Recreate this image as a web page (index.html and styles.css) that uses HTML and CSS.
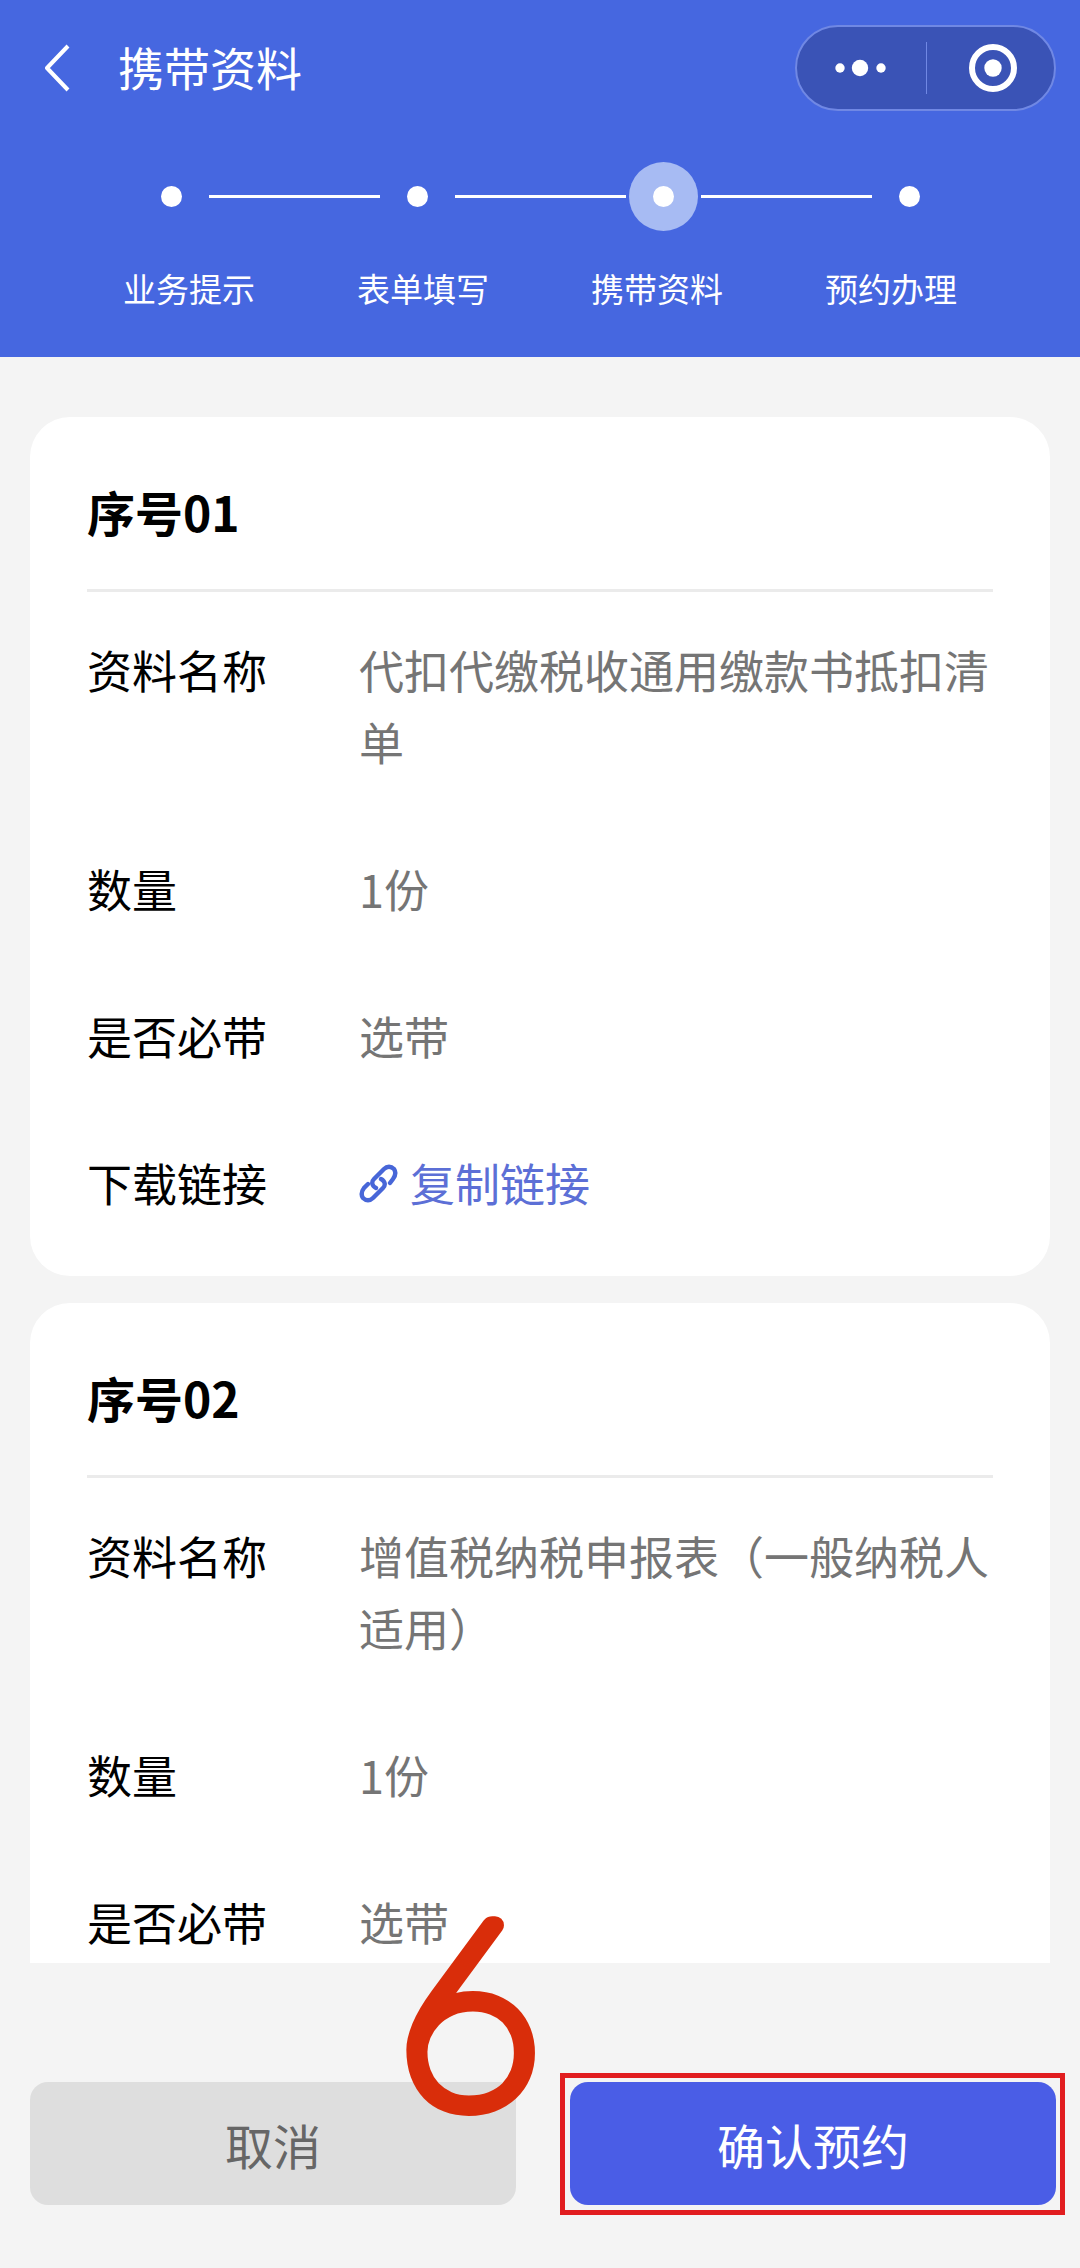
FILE: index.html
```html
<!DOCTYPE html>
<html lang="zh-CN">
<head>
<meta charset="utf-8">
<meta name="viewport" content="width=device-width, initial-scale=1">
<title>携带资料</title>
<link rel="stylesheet" href="styles.css">
</head>
<body>
<div class="page">
  <header class="header">
    <nav class="navbar">
      <button class="back" type="button" aria-label="返回">
        <svg width="26" height="48" viewBox="0 0 26 48" fill="none" stroke="#fff" stroke-width="4" stroke-linejoin="round"><path d="M23 2 2 24l21 22"/></svg>
      </button>
      <h1 class="title">携带资料</h1>
      <div class="capsule">
        <button class="capsule-btn" type="button" aria-label="更多">
          <svg width="52" height="18" viewBox="0 0 52 18" fill="#fff"><circle cx="5" cy="9" r="4.7"/><circle cx="25" cy="9" r="8.2"/><circle cx="46" cy="9" r="4.7"/></svg>
        </button>
        <button class="capsule-btn" type="button" aria-label="关闭">
          <svg width="50" height="50" viewBox="0 0 50 50"><circle cx="25" cy="25" r="21" fill="none" stroke="#fff" stroke-width="6"/><circle cx="25" cy="25" r="8.7" fill="#fff"/></svg>
        </button>
      </div>
    </nav>
    <div class="track">
      <span class="node"></span><span class="line"></span>
      <span class="node"></span><span class="line"></span>
      <span class="node node-active"></span><span class="line"></span>
      <span class="node"></span>
    </div>
    <ol class="steps">
      <li>业务提示</li>
      <li>表单填写</li>
      <li aria-current="step">携带资料</li>
      <li>预约办理</li>
    </ol>
  </header>

  <main class="list">
    <section class="card">
      <h2 class="card-title">序号01</h2>
      <dl class="fields">
        <dt>资料名称</dt><dd>代扣代缴税收通用缴款书抵扣清单</dd>
        <dt>数量</dt><dd>1份</dd>
        <dt>是否必带</dt><dd>选带</dd>
        <dt>下载链接</dt>
        <dd>
          <a class="copy" href="#">
            <svg width="39" height="40" viewBox="0 0 39 40" fill="none" stroke="#4766d8" stroke-width="4.4" stroke-linecap="round"><path d="M31 20l3-4c3-4 3-7 1-10-3-3-7-3-10 0L15 16c-3 3-2 7 2 9"/><path d="M9 21l-4 4c-3 4-3 7-1 10 3 3 7 3 10 0L24 25c3-3 2-7-2-9"/></svg>
            <span>复制链接</span>
          </a>
        </dd>
      </dl>
    </section>
    <section class="card">
      <h2 class="card-title">序号02</h2>
      <dl class="fields">
        <dt>资料名称</dt><dd>增值税纳税申报表（一般纳税人适用）</dd>
        <dt>数量</dt><dd>1份</dd>
        <dt>是否必带</dt><dd>选带</dd>
      </dl>
    </section>
  </main>

  <footer class="actions">
    <div class="action">
      <button class="btn btn-cancel" type="button">取消</button>
      <svg class="mark" width="140" height="230" viewBox="0 0 140 230"><text x="70" y="210" text-anchor="middle">6</text></svg>
    </div>
    <div class="action action-marked">
      <button class="btn btn-confirm" type="button">确认预约</button>
    </div>
  </footer>
</div>
</body>
</html>
```

FILE: styles.css
```css
* {
  box-sizing: border-box;
  margin: 0;
  padding: 0;
}

body {
  background: #f4f4f4;
  color: #000;
  font-family: "Noto Sans CJK SC", "Noto Sans", sans-serif;
  font-size: 45px;
  line-height: 72px;
}

button {
  border: 0;
  background: none;
  color: inherit;
  font: inherit;
  cursor: pointer;
}

.page {
  display: flex;
  flex-direction: column;
  height: 100vh;
}

/* Header */
.header {
  flex: none;
  padding-bottom: 45px;
  background: #4667e0;
  color: #fff;
}

.navbar {
  display: flex;
  align-items: center;
  padding: 25px 24px 0 45px;
}

.back {
  display: flex;
  width: 73px;
}

.title {
  flex: 1;
  padding-bottom: 4px;
  font-size: 46px;
  font-weight: 400;
}

.capsule {
  display: flex;
  align-items: center;
  width: 261px;
  height: 86px;
  border: 2px solid #7088e4;
  border-radius: 43px;
  background: #3a53b6;
}

.capsule-btn {
  display: flex;
  align-items: center;
  justify-content: center;
  width: 50%;
  height: 52px;
}

.capsule-btn + .capsule-btn {
  border-left: 1px solid #7088e4;
  padding-left: 6px;
}

.track {
  display: flex;
  align-items: center;
  height: 69px;
  margin-top: 51px;
  padding: 0 133px 0 134px;
}

.node {
  display: flex;
  align-items: center;
  justify-content: center;
  flex: none;
  width: 69px;
  height: 69px;
  margin: 0 3px;
  border-radius: 50%;
}

.node::before {
  width: 21px;
  height: 21px;
  border-radius: 50%;
  background: #fff;
  content: "";
}

.node-active {
  background: #a7bbf3;
}

.line {
  flex: 1;
  height: 3px;
  background: #fff;
}

.steps {
  display: flex;
  justify-content: space-between;
  margin-top: 33px;
  padding: 0 123px;
  font-size: 33px;
  line-height: 48px;
  list-style: none;
}

/* Material cards */
.list {
  display: flex;
  flex: 1;
  flex-direction: column;
  gap: 27px;
  min-height: 0;
  padding: 60px 30px 0;
  overflow-y: auto;
  scrollbar-width: none;
}

.card {
  flex: none;
  padding: 58px 57px 57px;
  border-radius: 40px;
  background: #fff;
}

.card-title {
  padding-bottom: 42px;
  border-bottom: 3px solid #ebebeb;
  font-size: 48px;
  font-weight: 700;
}

.fields {
  display: grid;
  grid-template-columns: 272px 1fr;
  row-gap: 75px;
  padding-top: 42px;
}

.fields dd {
  color: #757575;
}

.copy {
  display: flex;
  align-items: center;
  gap: 12px;
  width: fit-content;
  color: #5c6fd6;
  text-decoration: none;
}

/* Bottom actions */
.actions {
  display: flex;
  flex: none;
  gap: 44px;
  padding: 110px 15px 53px 30px;
}

.action {
  position: relative;
  flex: 1;
  padding: 9px 0 10px;
}

.action-marked {
  flex: 1 0 19px;
  padding: 4px 4px 5px 5px;
  border: 5px solid #e11d1f;
}

.btn {
  display: block;
  width: 100%;
  height: 123px;
  border-radius: 18px;
  font-size: 48px;
}

.btn-cancel {
  background: #dedede;
  color: #666;
}

.btn-confirm {
  background: #4a5de6;
  color: #fff;
}

.mark {
  position: absolute;
  right: -23px;
  bottom: 90px;
  font-family: Lato, sans-serif;
  font-size: 256px;
  font-weight: 100;
  fill: #d92d0a;
  stroke: #d92d0a;
  stroke-width: 18px;
  stroke-linejoin: round;
  overflow: visible;
  pointer-events: none;
}
```
